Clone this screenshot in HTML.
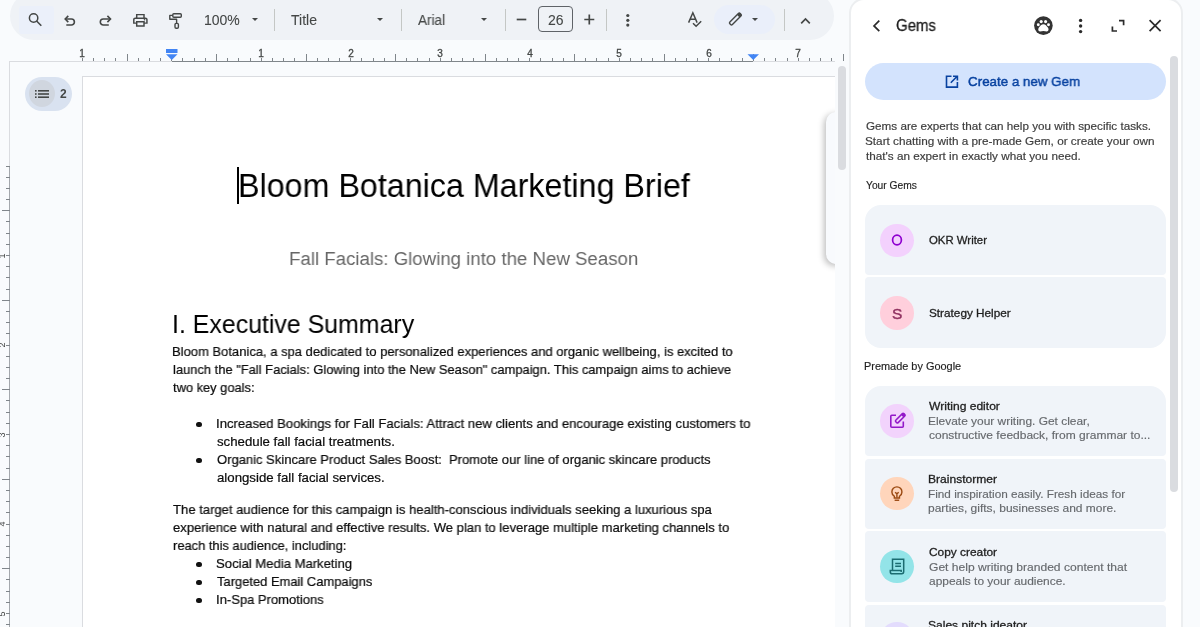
<!DOCTYPE html>
<html><head><meta charset="utf-8">
<style>
*{margin:0;padding:0;box-sizing:border-box}
html,body{width:1200px;height:627px;overflow:hidden;background:#f9fbfd;font-family:"Liberation Sans",sans-serif;position:relative}
.abs{position:absolute}
.tx{position:absolute;white-space:nowrap;transform-origin:0 0;will-change:transform}
#tb{position:absolute;left:10px;top:-8px;width:824px;height:48px;border-radius:24px;background:#eff2f6}
.sep{position:absolute;top:8.5px;width:1px;height:22px;background:#c4c7c5}
.tri{position:absolute;width:0;height:0;border-left:3.6px solid transparent;border-right:3.6px solid transparent;border-top:3.8px solid #444746}
#docv{position:absolute;left:10px;top:62px;width:825px;height:565px;overflow:hidden}
#page{position:absolute;left:72px;top:14px;width:800px;height:700px;background:#fff;border:1px solid #dadce0}
.dot{position:absolute;width:5.6px;height:5.6px;border-radius:50%;background:#111}
#gp{position:absolute;left:848.8px;top:-1.6px;width:334px;height:700px;background:#fff;border:2px solid #eceef0;border-radius:15px 15px 0 0}
.card{position:absolute;left:865px;width:301px;background:#f0f4f9}
.av{position:absolute;left:880px;width:34px;height:34px;border-radius:50%}
svg{position:absolute;overflow:visible}
</style></head><body>
<div id="tb"></div>
<div class="abs" style="left:19px;top:6px;width:35px;height:28px;border-radius:3px;background:#ebf0fa"></div>
<div class="abs" style="left:714px;top:5px;width:61px;height:29px;border-radius:15px;background:#eaeffa"></div>
<div class="sep" style="left:274px"></div>
<div class="sep" style="left:401px"></div>
<div class="sep" style="left:505px"></div>
<div class="sep" style="left:606px"></div>
<div class="sep" style="left:784px"></div>
<div class="tri" style="left:252px;top:17.8px"></div>
<div class="tri" style="left:376.7px;top:17.8px"></div>
<div class="tri" style="left:480.6px;top:17.8px"></div>
<div class="tri" style="left:751.7px;top:17.5px"></div>
<div class="abs" style="left:538px;top:6px;width:35px;height:26px;border:1px solid #5f6368;border-radius:4px"></div>

<!-- toolbar icons -->
<svg style="left:0;top:0" width="1" height="1">
 <g fill="none" stroke="#444746" stroke-width="1.7" stroke-linecap="butt">
  <!-- search -->
  <circle cx="33.6" cy="18" r="4.2" stroke-width="1.5"/>
  <path d="M36.6 21 L41.3 25.7" stroke-width="1.6"/>
  <!-- undo -->
  <path d="M68.3 15.9 L65.2 19 L68.3 22.1" stroke-width="1.6"/>
  <path d="M65.5 19 H71.4 A3 3 0 0 1 71.4 25 H66.3" stroke-width="1.6"/>
  <!-- redo -->
  <path d="M107.4 15.9 L110.5 19 L107.4 22.1" stroke-width="1.6"/>
  <path d="M110.2 19 H103.3 A3 3 0 0 0 103.3 25 H108.8" stroke-width="1.6"/>
  <!-- minus / plus -->
  <path d="M516.7 19.5 H526.3"/>
  <path d="M584.3 19.5 H594.3 M589.3 14.5 V24.5"/>
  <!-- caret up -->
  <path d="M801.2 23.3 L805.5 19 L809.8 23.3"/>
 </g>
 <g fill="#444746">
  <!-- print -->
  <path transform="translate(131.6,11.8) scale(0.73,0.71)" d="M19 8h-1V3H6v5H5c-1.66 0-3 1.34-3 3v6h4v4h12v-4h4v-6c0-1.66-1.34-3-3-3zM8 5h8v3H8V5zm8 12v2H8v-4h8v2zm2-2v-2H6v2H4v-4c0-.55.45-1 1-1h14c.55 0 1 .45 1 1v4h-2z"/>
  <circle cx="144.5" cy="19.8" r="0.8"/>
  <!-- kebab -->
  <circle cx="627.8" cy="15.5" r="1.6"/><circle cx="627.8" cy="20.3" r="1.6"/><circle cx="627.8" cy="25.1" r="1.6"/>
 </g>
 <g fill="none" stroke="#444746" stroke-width="1.6">
  <!-- paint format -->
  <rect x="172.8" y="13.8" width="8.5" height="3.4" rx="1" stroke-width="1.4"/>
  <path d="M172.8 15.4 H169.8 V19.3 H176.6 V23" stroke-width="1.4" stroke-linejoin="round"/>
  <rect x="175" y="23.4" width="3.4" height="4.8" rx="1.2" stroke-width="1.4"/>
  <!-- spellcheck -->
  <path d="M688.6 22.6 L692.85 12.8 L697.1 22.6 M690.1 19.3 H695.6" stroke-width="1.5"/>
  <path d="M693 23.2 L696.1 26.3 L701.2 21.2" stroke-width="1.5"/>
 </g>
 <g transform="translate(735.4 19) rotate(-45)">
  <rect x="-7.3" y="-1.8" width="14.6" height="3.6" rx="1.3" fill="none" stroke="#444746" stroke-width="1.4"/>
  <rect x="4" y="-1.8" width="3.5" height="3.6" rx="1" fill="#444746"/>
 </g>
 <g>
 </g>
</svg>

<!-- doc viewport -->
<div id="docv"><div id="page"></div></div>
<div class="abs" style="left:10px;top:61px;width:825px;height:1px;background:#dadce0"></div>
<div class="abs" style="left:172px;top:61px;width:581px;height:1px;background:#80868b"></div>
<div class="abs" style="left:9px;top:61px;width:1px;height:566px;background:#dadce0"></div>
<div class="abs" style="left:9.1px;top:166px;width:1.3px;height:461px;background:#a4a8ad"></div>
<div class="abs" style="left:81.80px;top:58px;width:1px;height:3px;background:#80868b"></div>
<div class="tx" style="left:79.30px;top:48.5px;width:6px;text-align:center;font-size:10px;line-height:10px;color:#444746;-webkit-text-stroke:0.3px #444746">1</div>
<div class="abs" style="left:92.99px;top:58px;width:1px;height:3px;background:#80868b"></div>
<div class="abs" style="left:104.18px;top:58px;width:1px;height:3px;background:#80868b"></div>
<div class="abs" style="left:115.36px;top:58px;width:1px;height:3px;background:#80868b"></div>
<div class="abs" style="left:126.55px;top:54px;width:1px;height:7px;background:#80868b"></div>
<div class="abs" style="left:137.74px;top:58px;width:1px;height:3px;background:#80868b"></div>
<div class="abs" style="left:148.93px;top:58px;width:1px;height:3px;background:#80868b"></div>
<div class="abs" style="left:160.11px;top:58px;width:1px;height:3px;background:#80868b"></div>
<div class="abs" style="left:171.30px;top:58px;width:1px;height:3px;background:#80868b"></div>
<div class="abs" style="left:182.49px;top:58px;width:1px;height:3px;background:#80868b"></div>
<div class="abs" style="left:193.68px;top:58px;width:1px;height:3px;background:#80868b"></div>
<div class="abs" style="left:204.86px;top:58px;width:1px;height:3px;background:#80868b"></div>
<div class="abs" style="left:216.05px;top:54px;width:1px;height:7px;background:#80868b"></div>
<div class="abs" style="left:227.24px;top:58px;width:1px;height:3px;background:#80868b"></div>
<div class="abs" style="left:238.43px;top:58px;width:1px;height:3px;background:#80868b"></div>
<div class="abs" style="left:249.61px;top:58px;width:1px;height:3px;background:#80868b"></div>
<div class="abs" style="left:260.80px;top:58px;width:1px;height:3px;background:#80868b"></div>
<div class="tx" style="left:258.30px;top:48.5px;width:6px;text-align:center;font-size:10px;line-height:10px;color:#444746;-webkit-text-stroke:0.3px #444746">1</div>
<div class="abs" style="left:271.99px;top:58px;width:1px;height:3px;background:#80868b"></div>
<div class="abs" style="left:283.18px;top:58px;width:1px;height:3px;background:#80868b"></div>
<div class="abs" style="left:294.36px;top:58px;width:1px;height:3px;background:#80868b"></div>
<div class="abs" style="left:305.55px;top:54px;width:1px;height:7px;background:#80868b"></div>
<div class="abs" style="left:316.74px;top:58px;width:1px;height:3px;background:#80868b"></div>
<div class="abs" style="left:327.93px;top:58px;width:1px;height:3px;background:#80868b"></div>
<div class="abs" style="left:339.11px;top:58px;width:1px;height:3px;background:#80868b"></div>
<div class="abs" style="left:350.30px;top:58px;width:1px;height:3px;background:#80868b"></div>
<div class="tx" style="left:347.80px;top:48.5px;width:6px;text-align:center;font-size:10px;line-height:10px;color:#444746;-webkit-text-stroke:0.3px #444746">2</div>
<div class="abs" style="left:361.49px;top:58px;width:1px;height:3px;background:#80868b"></div>
<div class="abs" style="left:372.68px;top:58px;width:1px;height:3px;background:#80868b"></div>
<div class="abs" style="left:383.86px;top:58px;width:1px;height:3px;background:#80868b"></div>
<div class="abs" style="left:395.05px;top:54px;width:1px;height:7px;background:#80868b"></div>
<div class="abs" style="left:406.24px;top:58px;width:1px;height:3px;background:#80868b"></div>
<div class="abs" style="left:417.43px;top:58px;width:1px;height:3px;background:#80868b"></div>
<div class="abs" style="left:428.61px;top:58px;width:1px;height:3px;background:#80868b"></div>
<div class="abs" style="left:439.80px;top:58px;width:1px;height:3px;background:#80868b"></div>
<div class="tx" style="left:437.30px;top:48.5px;width:6px;text-align:center;font-size:10px;line-height:10px;color:#444746;-webkit-text-stroke:0.3px #444746">3</div>
<div class="abs" style="left:450.99px;top:58px;width:1px;height:3px;background:#80868b"></div>
<div class="abs" style="left:462.18px;top:58px;width:1px;height:3px;background:#80868b"></div>
<div class="abs" style="left:473.36px;top:58px;width:1px;height:3px;background:#80868b"></div>
<div class="abs" style="left:484.55px;top:54px;width:1px;height:7px;background:#80868b"></div>
<div class="abs" style="left:495.74px;top:58px;width:1px;height:3px;background:#80868b"></div>
<div class="abs" style="left:506.93px;top:58px;width:1px;height:3px;background:#80868b"></div>
<div class="abs" style="left:518.11px;top:58px;width:1px;height:3px;background:#80868b"></div>
<div class="abs" style="left:529.30px;top:58px;width:1px;height:3px;background:#80868b"></div>
<div class="tx" style="left:526.80px;top:48.5px;width:6px;text-align:center;font-size:10px;line-height:10px;color:#444746;-webkit-text-stroke:0.3px #444746">4</div>
<div class="abs" style="left:540.49px;top:58px;width:1px;height:3px;background:#80868b"></div>
<div class="abs" style="left:551.67px;top:58px;width:1px;height:3px;background:#80868b"></div>
<div class="abs" style="left:562.86px;top:58px;width:1px;height:3px;background:#80868b"></div>
<div class="abs" style="left:574.05px;top:54px;width:1px;height:7px;background:#80868b"></div>
<div class="abs" style="left:585.24px;top:58px;width:1px;height:3px;background:#80868b"></div>
<div class="abs" style="left:596.42px;top:58px;width:1px;height:3px;background:#80868b"></div>
<div class="abs" style="left:607.61px;top:58px;width:1px;height:3px;background:#80868b"></div>
<div class="abs" style="left:618.80px;top:58px;width:1px;height:3px;background:#80868b"></div>
<div class="tx" style="left:616.30px;top:48.5px;width:6px;text-align:center;font-size:10px;line-height:10px;color:#444746;-webkit-text-stroke:0.3px #444746">5</div>
<div class="abs" style="left:629.99px;top:58px;width:1px;height:3px;background:#80868b"></div>
<div class="abs" style="left:641.17px;top:58px;width:1px;height:3px;background:#80868b"></div>
<div class="abs" style="left:652.36px;top:58px;width:1px;height:3px;background:#80868b"></div>
<div class="abs" style="left:663.55px;top:54px;width:1px;height:7px;background:#80868b"></div>
<div class="abs" style="left:674.74px;top:58px;width:1px;height:3px;background:#80868b"></div>
<div class="abs" style="left:685.92px;top:58px;width:1px;height:3px;background:#80868b"></div>
<div class="abs" style="left:697.11px;top:58px;width:1px;height:3px;background:#80868b"></div>
<div class="abs" style="left:708.30px;top:58px;width:1px;height:3px;background:#80868b"></div>
<div class="tx" style="left:705.80px;top:48.5px;width:6px;text-align:center;font-size:10px;line-height:10px;color:#444746;-webkit-text-stroke:0.3px #444746">6</div>
<div class="abs" style="left:719.49px;top:58px;width:1px;height:3px;background:#80868b"></div>
<div class="abs" style="left:730.67px;top:58px;width:1px;height:3px;background:#80868b"></div>
<div class="abs" style="left:741.86px;top:58px;width:1px;height:3px;background:#80868b"></div>
<div class="abs" style="left:753.05px;top:54px;width:1px;height:7px;background:#80868b"></div>
<div class="abs" style="left:764.24px;top:58px;width:1px;height:3px;background:#80868b"></div>
<div class="abs" style="left:775.42px;top:58px;width:1px;height:3px;background:#80868b"></div>
<div class="abs" style="left:786.61px;top:58px;width:1px;height:3px;background:#80868b"></div>
<div class="abs" style="left:797.80px;top:58px;width:1px;height:3px;background:#80868b"></div>
<div class="tx" style="left:795.30px;top:48.5px;width:6px;text-align:center;font-size:10px;line-height:10px;color:#444746;-webkit-text-stroke:0.3px #444746">7</div>
<div class="abs" style="left:808.99px;top:58px;width:1px;height:3px;background:#80868b"></div>
<div class="abs" style="left:820.17px;top:58px;width:1px;height:3px;background:#80868b"></div>
<div class="abs" style="left:831.36px;top:58px;width:1px;height:3px;background:#80868b"></div>
<div class="abs" style="left:842.55px;top:54px;width:1px;height:7px;background:#80868b"></div>
<div class="abs" style="left:6px;top:165.50px;width:4px;height:1px;background:#80868b"></div>
<div class="abs" style="left:6px;top:176.69px;width:4px;height:1px;background:#80868b"></div>
<div class="abs" style="left:6px;top:187.88px;width:4px;height:1px;background:#80868b"></div>
<div class="abs" style="left:6px;top:199.06px;width:4px;height:1px;background:#80868b"></div>
<div class="abs" style="left:2px;top:210.25px;width:8px;height:1px;background:#80868b"></div>
<div class="abs" style="left:6px;top:221.44px;width:4px;height:1px;background:#80868b"></div>
<div class="abs" style="left:6px;top:232.62px;width:4px;height:1px;background:#80868b"></div>
<div class="abs" style="left:6px;top:243.81px;width:4px;height:1px;background:#80868b"></div>
<div class="abs" style="left:6px;top:255.00px;width:4px;height:1px;background:#80868b"></div>
<div class="tx" style="left:-2.2px;top:252.50px;width:8px;height:6px;text-align:center;font-size:9px;line-height:6px;color:#444746;transform:rotate(-90deg);transform-origin:50% 50%">1</div>
<div class="abs" style="left:6px;top:266.19px;width:4px;height:1px;background:#80868b"></div>
<div class="abs" style="left:6px;top:277.38px;width:4px;height:1px;background:#80868b"></div>
<div class="abs" style="left:6px;top:288.56px;width:4px;height:1px;background:#80868b"></div>
<div class="abs" style="left:2px;top:299.75px;width:8px;height:1px;background:#80868b"></div>
<div class="abs" style="left:6px;top:310.94px;width:4px;height:1px;background:#80868b"></div>
<div class="abs" style="left:6px;top:322.12px;width:4px;height:1px;background:#80868b"></div>
<div class="abs" style="left:6px;top:333.31px;width:4px;height:1px;background:#80868b"></div>
<div class="abs" style="left:6px;top:344.50px;width:4px;height:1px;background:#80868b"></div>
<div class="tx" style="left:-2.2px;top:342.00px;width:8px;height:6px;text-align:center;font-size:9px;line-height:6px;color:#444746;transform:rotate(-90deg);transform-origin:50% 50%">2</div>
<div class="abs" style="left:6px;top:355.69px;width:4px;height:1px;background:#80868b"></div>
<div class="abs" style="left:6px;top:366.88px;width:4px;height:1px;background:#80868b"></div>
<div class="abs" style="left:6px;top:378.06px;width:4px;height:1px;background:#80868b"></div>
<div class="abs" style="left:2px;top:389.25px;width:8px;height:1px;background:#80868b"></div>
<div class="abs" style="left:6px;top:400.44px;width:4px;height:1px;background:#80868b"></div>
<div class="abs" style="left:6px;top:411.62px;width:4px;height:1px;background:#80868b"></div>
<div class="abs" style="left:6px;top:422.81px;width:4px;height:1px;background:#80868b"></div>
<div class="abs" style="left:6px;top:434.00px;width:4px;height:1px;background:#80868b"></div>
<div class="tx" style="left:-2.2px;top:431.50px;width:8px;height:6px;text-align:center;font-size:9px;line-height:6px;color:#444746;transform:rotate(-90deg);transform-origin:50% 50%">3</div>
<div class="abs" style="left:6px;top:445.19px;width:4px;height:1px;background:#80868b"></div>
<div class="abs" style="left:6px;top:456.38px;width:4px;height:1px;background:#80868b"></div>
<div class="abs" style="left:6px;top:467.56px;width:4px;height:1px;background:#80868b"></div>
<div class="abs" style="left:2px;top:478.75px;width:8px;height:1px;background:#80868b"></div>
<div class="abs" style="left:6px;top:489.94px;width:4px;height:1px;background:#80868b"></div>
<div class="abs" style="left:6px;top:501.12px;width:4px;height:1px;background:#80868b"></div>
<div class="abs" style="left:6px;top:512.31px;width:4px;height:1px;background:#80868b"></div>
<div class="abs" style="left:6px;top:523.50px;width:4px;height:1px;background:#80868b"></div>
<div class="tx" style="left:-2.2px;top:521.00px;width:8px;height:6px;text-align:center;font-size:9px;line-height:6px;color:#444746;transform:rotate(-90deg);transform-origin:50% 50%">4</div>
<div class="abs" style="left:6px;top:534.69px;width:4px;height:1px;background:#80868b"></div>
<div class="abs" style="left:6px;top:545.88px;width:4px;height:1px;background:#80868b"></div>
<div class="abs" style="left:6px;top:557.06px;width:4px;height:1px;background:#80868b"></div>
<div class="abs" style="left:2px;top:568.25px;width:8px;height:1px;background:#80868b"></div>
<div class="abs" style="left:6px;top:579.44px;width:4px;height:1px;background:#80868b"></div>
<div class="abs" style="left:6px;top:590.62px;width:4px;height:1px;background:#80868b"></div>
<div class="abs" style="left:6px;top:601.81px;width:4px;height:1px;background:#80868b"></div>
<div class="abs" style="left:6px;top:613.00px;width:4px;height:1px;background:#80868b"></div>
<div class="tx" style="left:-2.2px;top:610.50px;width:8px;height:6px;text-align:center;font-size:9px;line-height:6px;color:#444746;transform:rotate(-90deg);transform-origin:50% 50%">5</div>
<div class="abs" style="left:6px;top:624.19px;width:4px;height:1px;background:#80868b"></div>
<!-- ruler markers -->
<svg style="left:0;top:0" width="1" height="1">
 <g fill="#4285f4">
  <rect x="166" y="49" width="11.5" height="4"/>
  <path d="M166 54.2 H177.5 L171.75 60 Z"/>
  <path d="M747.5 54.2 H759 L753.25 60 Z"/>
 </g>
</svg>
<!-- doc scrollbar + floating card -->
<div class="abs" style="left:800px;top:90px;width:35px;height:200px;overflow:hidden"><div class="abs" style="left:26px;top:22px;width:30px;height:152px;border-radius:10px;background:#f8fafd;box-shadow:-2px 2px 6px rgba(0,0,0,0.26)"></div></div>
<div class="abs" style="left:838px;top:66px;width:7.5px;height:104px;border-radius:4px;background:#dadce0"></div>

<!-- outline pill -->
<div class="abs" style="left:25px;top:77px;width:47px;height:34px;border-radius:17px;background:#d9e2f0"></div>
<div class="abs" style="left:29px;top:80px;width:26px;height:27px;border-radius:50%;background:#d0d6df"></div>
<svg style="left:0;top:0" width="1" height="1"><g fill="#444746">
 <rect x="35" y="90" width="1.6" height="1.6"/><rect x="35" y="93.2" width="1.6" height="1.6"/><rect x="35" y="96.4" width="1.6" height="1.6"/>
 <rect x="38" y="90" width="11" height="1.6"/><rect x="38" y="93.2" width="11" height="1.6"/><rect x="38" y="96.4" width="11" height="1.6"/>
</g></svg>
<div class="tx" style="left:59.8px;top:87.6px;font-size:12px;line-height:12px;font-weight:bold;color:#444746">2</div>

<!-- cursor -->
<div id="cursor" class="abs" style="left:237.2px;top:167px;width:1.6px;height:37px;background:#000"></div>
<!-- bullets -->
<div class="dot" style="left:196px;top:421.8px"></div>
<div class="dot" style="left:196px;top:457.7px"></div>
<div class="dot" style="left:196px;top:561.8px"></div>
<div class="dot" style="left:196px;top:579.7px"></div>
<div class="dot" style="left:196px;top:597.7px"></div>

<!-- gems panel -->
<div id="gp"></div>
<div class="abs" style="left:1170px;top:56px;width:8px;height:436px;border-radius:4px;background:#dadce0"></div>
<svg style="left:0;top:0" width="1" height="1">
 <g fill="none" stroke="#2b2b2b" stroke-width="1.7">
  <path d="M879.3 20.6 L874 25.9 L879.3 31.2"/>
  <path d="M1149.6 20.2 L1160.6 31.2 M1160.6 20.2 L1149.6 31.2"/>
  <path d="M1119 20.7 H1123.6 V25.2"/>
  <path d="M1112.4 26.5 V31 H1117"/>
 </g>
 <g fill="#2b2b2b">
  <circle cx="1080.6" cy="20.4" r="1.7"/><circle cx="1080.6" cy="26" r="1.7"/><circle cx="1080.6" cy="31.6" r="1.7"/>
  <circle cx="1043.4" cy="25.6" r="9.3" fill="#333"/>
 </g>
 <g fill="#fff">
  <circle cx="1041.2" cy="21.6" r="1.55"/><circle cx="1045.6" cy="21.6" r="1.55"/>
  <circle cx="1038.3" cy="24.7" r="1.45"/><circle cx="1048.5" cy="24.7" r="1.45"/>
  <path d="M1043.4 24.2 C1041.5 24.2 1040 26 1038.9 27.6 C1037.8 29.2 1038 31.4 1040 31.5 C1041.2 31.5 1042.2 31.1 1043.4 31.1 C1044.6 31.1 1045.6 31.5 1046.8 31.5 C1048.8 31.4 1049 29.2 1047.9 27.6 C1046.8 26 1045.3 24.2 1043.4 24.2 Z"/>
 </g>
</svg>
<div class="abs" style="left:865px;top:63px;width:301px;height:37px;border-radius:19px;background:#d3e3fd"></div>
<svg style="left:0;top:0" width="1" height="1">
 <g fill="none" stroke="#0842a0" stroke-width="1.6">
  <path d="M951.5 76.2 H946.5 V87.1 H957.4 V82"/>
  <path d="M950.8 82.7 L957.2 76.3 M953 76.2 H957.4 V80.6"/>
 </g>
</svg>

<div class="card" style="top:204.7px;height:70.6px;border-radius:16px 16px 4px 4px"></div>
<div class="card" style="top:277.4px;height:71px;border-radius:4px 4px 16px 16px"></div>
<div class="card" style="top:385.7px;height:70.2px;border-radius:16px 16px 4px 4px"></div>
<div class="card" style="top:458.5px;height:70.5px;border-radius:4px"></div>
<div class="card" style="top:531.3px;height:70.5px;border-radius:4px"></div>
<div class="card" style="top:604.5px;height:70.5px;border-radius:4px"></div>

<div class="av" style="left:880.1px;top:223.5px;width:33.6px;height:33.6px;background:#f3d1fd"></div>
<div class="av" style="left:880.1px;top:296.1px;width:33.6px;height:33.6px;background:#ffcfdc"></div>
<div class="av" style="left:880.1px;top:404.2px;width:33.6px;height:33.6px;background:#f2d3fc"></div>
<div class="av" style="left:880.1px;top:476.6px;width:33.6px;height:33.6px;background:#ffd5bb"></div>
<div class="av" style="left:880.1px;top:549.6px;width:33.6px;height:33.6px;background:#93e4e8"></div>
<div class="av" style="left:880.1px;top:622px;width:33.6px;height:33.6px;background:#e3dcfd"></div>
<svg style="left:0;top:0" width="1" height="1"><ellipse cx="897" cy="240" rx="4.4" ry="4.8" fill="none" stroke="#8f00d0" stroke-width="1.7"/></svg>
<div class="tx" style="left:892.3px;top:305.5px;font-size:15.5px;line-height:15.5px;color:#8e2f5e;-webkit-text-stroke:0.4px currentColor">S</div>
<svg style="left:0;top:0" width="1" height="1">
 <g fill="none" stroke="#9318c9" stroke-width="1.6">
  <path d="M896 415.2 H891.8 Q890.8 415.2 890.8 416.2 V426.3 Q890.8 427.3 891.8 427.3 H902.3 Q903.3 427.3 903.3 426.3 V421.5" stroke-linejoin="round"/>
 </g>
 <g transform="translate(900.2 418.2) rotate(-45)">
  <rect x="-5.6" y="-1.7" width="11.4" height="3.4" rx="1" fill="none" stroke="#9318c9" stroke-width="1.5"/>
  <rect x="2.8" y="-1.75" width="3.3" height="3.5" rx="1.2" fill="#9318c9"/>
 </g>
 <g>
 </g>
 <g fill="none" stroke="#9c4a12" stroke-width="1.5" transform="translate(897 493.5) scale(0.95) translate(-897 -492.7)">
  <path d="M894.2 497.5 V495.6 C892.5 494.5 891.6 492.9 891.6 491 A5.3 5.3 0 0 1 902.2 491 C902.2 492.9 901.3 494.5 899.6 495.6 V497.5 Z"/>
  <path d="M894.5 499.8 H899.3"/>
  <path d="M895 491.3 L896.9 493 L898.8 491.3 M896.9 493 V497"/>
 </g>
 <g fill="none" stroke="#1b6c70" stroke-width="1.5">
  <path d="M892.5 570.5 V559.2 H903.7 V571.6 C903.7 573 902.9 573.7 901.8 573.7 H892.2 C890.9 573.7 890.3 572.9 890.3 571.9 V570.5 H901.2 V572"/>
  <path d="M895.2 563.5 H901 M895.2 566.2 H901"/>
 </g>
</svg>

<div class="tx" id="t0" style="left:204.30px;top:12.75px;font-size:14px;line-height:14px;color:#444746;font-weight:normal;-webkit-text-stroke:0.1px currentColor;">100%</div>
<div class="tx" id="t1" style="left:291.00px;top:12.55px;font-size:14px;line-height:14px;color:#444746;font-weight:normal;-webkit-text-stroke:0.1px currentColor;">Title</div>
<div class="tx" id="t2" style="left:418.00px;top:12.55px;font-size:14px;line-height:14px;color:#444746;font-weight:normal;transform:scaleX(0.9669);-webkit-text-stroke:0.1px currentColor;">Arial</div>
<div class="tx" id="t3" style="left:548.00px;top:12.75px;font-size:14px;line-height:14px;color:#444746;font-weight:normal;-webkit-text-stroke:0.1px currentColor;">26</div>
<div class="tx" id="t4" style="left:237.72px;top:170.40px;font-size:32.6px;line-height:32.6px;color:#000;font-weight:normal;transform:scaleX(0.9900);">Bloom Botanica Marketing Brief</div>
<div class="tx" id="t5" style="left:289.30px;top:249.25px;font-size:19.2px;line-height:19.2px;color:#666666;font-weight:normal;transform:scaleX(0.9719);">Fall Facials: Glowing into the New Season</div>
<div class="tx" id="t6" style="left:171.81px;top:311.64px;font-size:25px;line-height:25px;color:#000;font-weight:normal;transform:scaleX(0.9959);">I. Executive Summary</div>
<div class="tx" id="t7" style="left:172.30px;top:344.63px;font-size:13.2px;line-height:13.2px;color:#0d0d0d;font-weight:normal;transform:scaleX(0.9854);-webkit-text-stroke:0.22px currentColor;">Bloom Botanica, a spa dedicated to personalized experiences and organic wellbeing, is excited to</div>
<div class="tx" id="t8" style="left:173.00px;top:362.63px;font-size:13.2px;line-height:13.2px;color:#0d0d0d;font-weight:normal;transform:scaleX(0.9794);-webkit-text-stroke:0.22px currentColor;">launch the "Fall Facials: Glowing into the New Season" campaign. This campaign aims to achieve</div>
<div class="tx" id="t9" style="left:173.00px;top:380.63px;font-size:13.2px;line-height:13.2px;color:#0d0d0d;font-weight:normal;transform:scaleX(0.9759);-webkit-text-stroke:0.22px currentColor;">two key goals:</div>
<div class="tx" id="t10" style="left:216.45px;top:416.73px;font-size:13.2px;line-height:13.2px;color:#0d0d0d;font-weight:normal;transform:scaleX(0.9933);-webkit-text-stroke:0.22px currentColor;">Increased Bookings for Fall Facials: Attract new clients and encourage existing customers to</div>
<div class="tx" id="t11" style="left:217.15px;top:434.63px;font-size:13.2px;line-height:13.2px;color:#0d0d0d;font-weight:normal;transform:scaleX(1.0029);-webkit-text-stroke:0.22px currentColor;">schedule fall facial treatments.</div>
<div class="tx" id="t12" style="left:217.15px;top:452.63px;font-size:13.2px;line-height:13.2px;color:#0d0d0d;font-weight:normal;transform:scaleX(0.9860);-webkit-text-stroke:0.22px currentColor;">Organic Skincare Product Sales Boost:  Promote our line of organic skincare products</div>
<div class="tx" id="t13" style="left:217.15px;top:470.53px;font-size:13.2px;line-height:13.2px;color:#0d0d0d;font-weight:normal;transform:scaleX(1.0031);-webkit-text-stroke:0.22px currentColor;">alongside fall facial services.</div>
<div class="tx" id="t14" style="left:173.00px;top:502.63px;font-size:13.2px;line-height:13.2px;color:#0d0d0d;font-weight:normal;transform:scaleX(0.9906);-webkit-text-stroke:0.22px currentColor;">The target audience for this campaign is health-conscious individuals seeking a luxurious spa</div>
<div class="tx" id="t15" style="left:173.00px;top:520.63px;font-size:13.2px;line-height:13.2px;color:#0d0d0d;font-weight:normal;transform:scaleX(0.9888);-webkit-text-stroke:0.22px currentColor;">experience with natural and effective results. We plan to leverage multiple marketing channels to</div>
<div class="tx" id="t16" style="left:173.00px;top:538.73px;font-size:13.2px;line-height:13.2px;color:#0d0d0d;font-weight:normal;transform:scaleX(0.9773);-webkit-text-stroke:0.22px currentColor;">reach this audience, including:</div>
<div class="tx" id="t17" style="left:216.45px;top:556.73px;font-size:13.2px;line-height:13.2px;color:#0d0d0d;font-weight:normal;transform:scaleX(0.9926);-webkit-text-stroke:0.22px currentColor;">Social Media Marketing</div>
<div class="tx" id="t18" style="left:217.15px;top:574.63px;font-size:13.2px;line-height:13.2px;color:#0d0d0d;font-weight:normal;transform:scaleX(0.9810);-webkit-text-stroke:0.22px currentColor;">Targeted Email Campaigns</div>
<div class="tx" id="t19" style="left:216.45px;top:592.63px;font-size:13.2px;line-height:13.2px;color:#0d0d0d;font-weight:normal;transform:scaleX(0.9862);-webkit-text-stroke:0.22px currentColor;">In-Spa Promotions</div>
<div class="tx" id="t20" style="left:895.91px;top:17.89px;font-size:15.6px;line-height:15.6px;color:#1f1f1f;font-weight:normal;transform:scaleX(0.9610);-webkit-text-stroke:0.3px currentColor;">Gems</div>
<div class="tx" id="t21" style="left:968.09px;top:74.66px;font-size:13.4px;line-height:13.4px;color:#0842a0;font-weight:normal;transform:scaleX(0.9974);-webkit-text-stroke:0.45px currentColor;">Create a new Gem</div>
<div class="tx" id="t22" style="left:865.91px;top:120.73px;font-size:11.3px;line-height:11.3px;color:#3d3d3d;font-weight:normal;transform:scaleX(1.0338);-webkit-text-stroke:0.18px currentColor;">Gems are experts that can help you with specific tasks.</div>
<div class="tx" id="t23" style="left:864.51px;top:135.93px;font-size:11.3px;line-height:11.3px;color:#3d3d3d;font-weight:normal;transform:scaleX(1.0408);-webkit-text-stroke:0.18px currentColor;">Start chatting with a pre-made Gem, or create your own</div>
<div class="tx" id="t24" style="left:865.91px;top:150.63px;font-size:11.3px;line-height:11.3px;color:#3d3d3d;font-weight:normal;transform:scaleX(1.0379);-webkit-text-stroke:0.18px currentColor;">that's an expert in exactly what you need.</div>
<div class="tx" id="t25" style="left:865.91px;top:181.37px;font-size:10.2px;line-height:10.2px;color:#1f1f1f;font-weight:normal;transform:scaleX(1.0067);-webkit-text-stroke:0.15px currentColor;">Your Gems</div>
<div class="tx" id="t26" style="left:929.00px;top:234.52px;font-size:11.2px;line-height:11.2px;color:#1f1f1f;font-weight:normal;transform:scaleX(1.0175);-webkit-text-stroke:0.3px currentColor;">OKR Writer</div>
<div class="tx" id="t27" style="left:929.00px;top:307.52px;font-size:11.2px;line-height:11.2px;color:#1f1f1f;font-weight:normal;transform:scaleX(1.0513);-webkit-text-stroke:0.3px currentColor;">Strategy Helper</div>
<div class="tx" id="t28" style="left:864.45px;top:362.17px;font-size:10.2px;line-height:10.2px;color:#1f1f1f;font-weight:normal;transform:scaleX(1.0725);-webkit-text-stroke:0.15px currentColor;">Premade by Google</div>
<div class="tx" id="t29" style="left:929.00px;top:400.92px;font-size:11.2px;line-height:11.2px;color:#1f1f1f;font-weight:normal;transform:scaleX(1.0790);-webkit-text-stroke:0.3px currentColor;">Writing editor</div>
<div class="tx" id="t30" style="left:928.30px;top:415.62px;font-size:11.2px;line-height:11.2px;color:#66696d;font-weight:normal;transform:scaleX(1.0660);-webkit-text-stroke:0.15px currentColor;">Elevate your writing. Get clear,</div>
<div class="tx" id="t31" style="left:929.00px;top:430.42px;font-size:11.2px;line-height:11.2px;color:#66696d;font-weight:normal;transform:scaleX(1.0728);-webkit-text-stroke:0.15px currentColor;">constructive feedback, from grammar to...</div>
<div class="tx" id="t32" style="left:928.30px;top:473.92px;font-size:11.2px;line-height:11.2px;color:#1f1f1f;font-weight:normal;transform:scaleX(1.0784);-webkit-text-stroke:0.3px currentColor;">Brainstormer</div>
<div class="tx" id="t33" style="left:928.30px;top:488.62px;font-size:11.2px;line-height:11.2px;color:#66696d;font-weight:normal;transform:scaleX(1.0511);-webkit-text-stroke:0.15px currentColor;">Find inspiration easily. Fresh ideas for</div>
<div class="tx" id="t34" style="left:928.30px;top:503.42px;font-size:11.2px;line-height:11.2px;color:#66696d;font-weight:normal;transform:scaleX(1.0707);-webkit-text-stroke:0.15px currentColor;">parties, gifts, businesses and more.</div>
<div class="tx" id="t35" style="left:929.00px;top:546.92px;font-size:11.2px;line-height:11.2px;color:#1f1f1f;font-weight:normal;transform:scaleX(1.0625);-webkit-text-stroke:0.3px currentColor;">Copy creator</div>
<div class="tx" id="t36" style="left:929.00px;top:561.62px;font-size:11.2px;line-height:11.2px;color:#66696d;font-weight:normal;transform:scaleX(1.0793);-webkit-text-stroke:0.15px currentColor;">Get help writing branded content that</div>
<div class="tx" id="t37" style="left:929.00px;top:576.42px;font-size:11.2px;line-height:11.2px;color:#66696d;font-weight:normal;transform:scaleX(1.0662);-webkit-text-stroke:0.15px currentColor;">appeals to your audience.</div>
<div class="tx" id="t38" style="left:928.30px;top:619.92px;font-size:11.2px;line-height:11.2px;color:#1f1f1f;font-weight:normal;transform:scaleX(1.0762);-webkit-text-stroke:0.3px currentColor;">Sales pitch ideator</div>
</body></html>
